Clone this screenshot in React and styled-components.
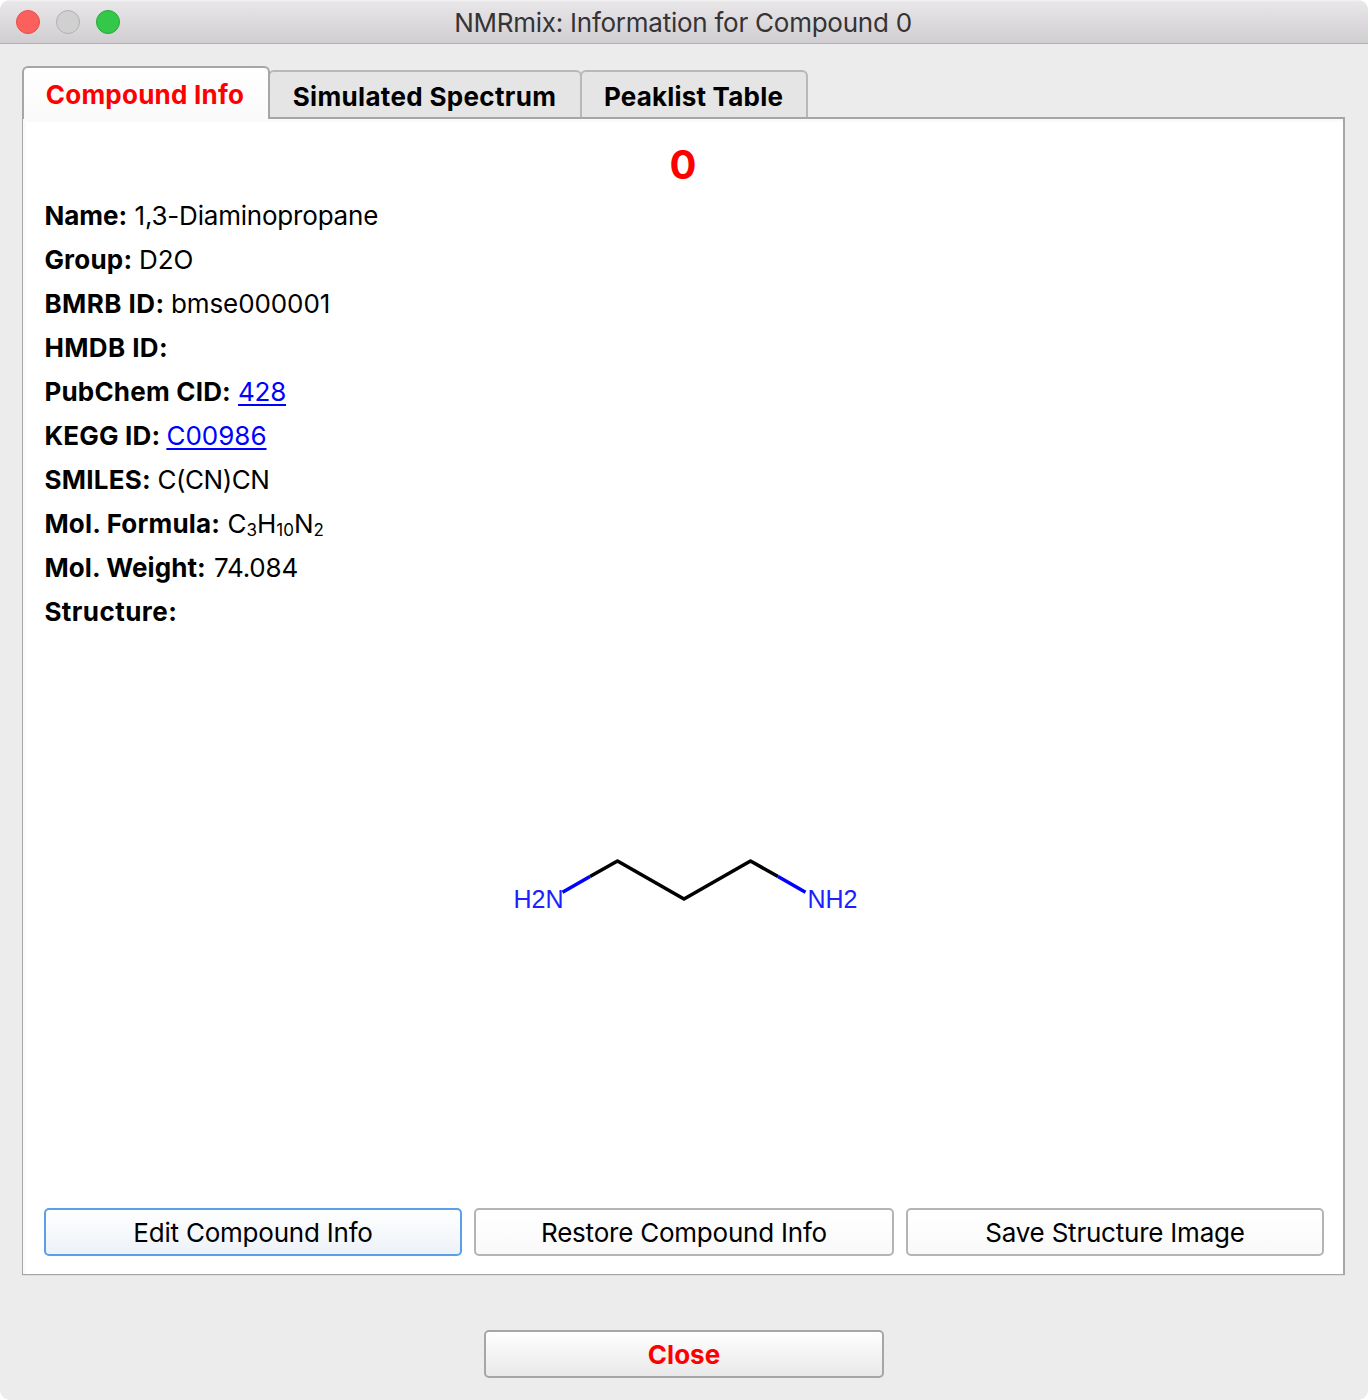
import React from "react";
import styled, { createGlobalStyle } from "styled-components";

const fontStack = `Inter, "Liberation Sans", sans-serif`;

const GlobalStyle = createGlobalStyle`
  * { box-sizing: border-box; }
  body { margin: 0; background: #fff; font-family: ${fontStack}; font-size: 26px; color: #000; }
`;

const Window = styled.div`
  width: 1368px;
  height: 1400px;
  display: flex;
  flex-direction: column;
  align-items: flex-start;
  background: #ececec;
  border-radius: 10px;
  overflow: hidden;
`;

const TitleBar = styled.header`
  width: 100%;
  height: 44px;
  display: grid;
  grid-template-columns: 120px 1fr 120px;
  align-items: center;
  padding: 1px 18px 0 16px;
  border-bottom: 1px solid #b1afb1;
  background: linear-gradient(#f6f5f6 0, #e8e6e8 2px, #d1ced1 100%);
`;

const Lights = styled.div`
  display: flex;
  gap: 16px;
`;

const Light = styled.span`
  width: 24px;
  height: 24px;
  border-radius: 50%;
  background: ${(p) => p.$fill};
  border: 1px solid ${(p) => p.$edge};
`;

const Title = styled.h1`
  margin: 0;
  padding-top: 2px;
  font-size: 26px;
  font-weight: 400;
  line-height: 40px;
  letter-spacing: -0.25px;
  text-align: center;
  color: #353335;
`;

const Tabs = styled.nav`
  height: 53px;
  margin: 22px 22px -2px;
  display: flex;
  align-items: flex-start;
  z-index: 1;
`;

const Tab = styled.button`
  font: 700 26px/32px ${fontStack};
  letter-spacing: ${(p) => p.$track}px;
  width: ${(p) => p.$width}px;
  height: ${(p) => (p.$active ? 53 : 47)}px;
  margin: ${(p) => (p.$active ? "0" : "4px 0 0 -2px")};
  padding: ${(p) => (p.$active ? "3px 2px 0 0" : "4px 1px 0 0")};
  border: 2px solid ${(p) => (p.$active ? "#a6a6a6" : "#b8b8b8")};
  border-bottom: 0;
  border-radius: 6px 6px 0 0;
  color: ${(p) => (p.$active ? "#f00" : "#000")};
  background: ${(p) => (p.$active ? "linear-gradient(#fff, #fafafa)" : "#e5e5e5")};
  z-index: ${(p) => (p.$active ? 1 : 0)};
`;

const Pane = styled.main`
  width: 1323px;
  height: 1158px;
  margin-left: 22px;
  padding: 0 19px 18px 21px;
  display: flex;
  flex-direction: column;
  background: #fff;
  border: solid #a6a6a6;
  border-width: 2px 2px 1px 1px;
  box-shadow: inset 3px 3px #fafafa, 0 1px #dedede;
`;

const Heading = styled.h2`
  margin: 20px 2px 4px 0;
  font-size: 40px;
  line-height: 51px;
  text-align: center;
  color: #f00;
`;

const Row = styled.div`
  height: 44px;
  line-height: 44px;
  display: flex;
  white-space: nowrap;
`;

const Label = styled.span`
  width: ${(p) => p.$width}px;
  padding-left: 0.4px;
  font-weight: 700;
  letter-spacing: ${(p) => p.$track || 0}px;
`;

const Value = styled.span`
  letter-spacing: ${(p) => p.$track || 0}px;
`;

const Link = styled.a`
  color: #00f;
  letter-spacing: ${(p) => p.$track || 0}px;
  text-decoration: underline 2px;
  text-underline-offset: 3px;
  text-decoration-skip-ink: none;
`;

const Sub = styled.sub`
  font-size: 17px;
  line-height: 0;
  vertical-align: -3px;
`;

const Structure = styled.div`
  flex: 1;
  display: flex;
  justify-content: center;
  padding-top: 220px;
`;

const Buttons = styled.div`
  display: flex;
  gap: 12px;
`;

const Button = styled.button`
  flex: none;
  width: ${(p) => p.$width}px;
  height: 48px;
  padding: 2px 0 0;
  font: 400 26px/32px ${fontStack};
  letter-spacing: -0.22px;
  color: #000;
  border: 2px solid ${(p) => (p.$focus ? "#5b9fe6" : "#b4b4b4")};
  border-radius: 5px;
  background: ${(p) => (p.$focus ? "linear-gradient(#fff, #edf2f9)" : "linear-gradient(#fff, #f9f9f9)")};
`;

const CloseButton = styled(Button)`
  align-self: center;
  margin-top: 55px;
  font-weight: 700;
  letter-spacing: 0;
  color: #f00;
  border-color: #a6a6a6;
  background: linear-gradient(#fff, #e9e9e9);
`;

const Formula = () => (
  <Value>
    C<Sub>3</Sub>H<Sub>10</Sub>N<Sub>2</Sub>
  </Value>
);

const fields = [
  { label: "Name:", width: 90.5, value: "1,3-Diaminopropane", valueTrack: -0.2 },
  { label: "Group:", width: 95, track: 0.2, value: "D2O" },
  { label: "BMRB ID:", width: 127, track: 0.45, value: "bmse000001", valueTrack: -0.1 },
  { label: "HMDB ID:", width: 130, track: 0.4 },
  { label: "PubChem CID:", width: 194, track: 0.2, link: "428", valueTrack: -0.25 },
  { label: "KEGG ID:", width: 122.4, track: 0.2, link: "C00986" },
  { label: "SMILES:", width: 113.5, track: 0.25, value: "C(CN)CN", valueTrack: -0.45 },
  { label: "Mol. Formula:", width: 183.5, track: 0.2, formula: true },
  { label: "Mol. Weight:", width: 170, track: 0.1, value: "74.084", valueTrack: -0.2 },
  { label: "Structure:", width: 140, track: 0.45 },
];

const Molecule = () => (
  <svg width="352" height="60" viewBox="508 854 352 60">
    <g fill="none" strokeWidth="3.6" strokeLinejoin="round">
      <path d="M590 876.5 L617.5 861 L684 899 L750.5 861 L778 876.5" stroke="#000" />
      <path d="M562.5 892.3 L590 876.5 M778 876.5 L805.5 892.3" stroke="#00f" />
    </g>
    <g fill="#2020ff" fontFamily="Liberation Sans, sans-serif" fontSize="25">
      <text x="513.5" y="908" textLength="50">H2N</text>
      <text x="807.5" y="908" textLength="50">NH2</text>
    </g>
  </svg>
);

export default function App() {
  return (
    <Window>
      <GlobalStyle />
      <TitleBar>
        <Lights>
          <Light $fill="#fc605c" $edge="#e2504b" />
          <Light $fill="#d0d0d0" $edge="#b0b0b0" />
          <Light $fill="#34c84a" $edge="#24a936" />
        </Lights>
        <Title>NMRmix: Information for Compound 0</Title>
      </TitleBar>
      <Tabs>
        <Tab $active $width={248} $track={0.24}>Compound Info</Tab>
        <Tab $width={314} $track={0.33}>Simulated Spectrum</Tab>
        <Tab $width={228} $track={0.2}>Peaklist Table</Tab>
      </Tabs>
      <Pane>
        <Heading>0</Heading>
        {fields.map((f) => (
          <Row key={f.label}>
            <Label $width={f.width} $track={f.track}>{f.label}</Label>
            {f.value && <Value $track={f.valueTrack}>{f.value}</Value>}
            {f.link && <Link href="#" $track={f.valueTrack}>{f.link}</Link>}
            {f.formula && <Formula />}
          </Row>
        ))}
        <Structure>
          <Molecule />
        </Structure>
        <Buttons>
          <Button $width={418} $focus>Edit Compound Info</Button>
          <Button $width={420}>Restore Compound Info</Button>
          <Button $width={418}>Save Structure Image</Button>
        </Buttons>
      </Pane>
      <CloseButton $width={400}>Close</CloseButton>
    </Window>
  );
}
